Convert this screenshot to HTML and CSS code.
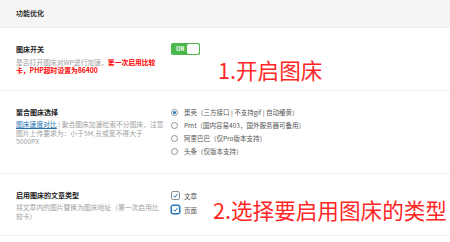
FILE: index.html
```html
<!DOCTYPE html>
<html lang="zh">
<head>
<meta charset="utf-8">
<link rel="stylesheet" href="styles.css">
</head>
<body>
<div class="panel">
  <div class="head">功能优化</div>

  <div class="row">
    <div class="left">
      <div class="label">图床开关</div>
      <div class="desc">是否打开图床对WP进行加速，<strong class="warn">第一次启用比较<br>卡，PHP超时设置为86400</strong></div>
    </div>
    <div class="right">
      <span class="toggle"><span class="toggle-text">ON</span><span class="knob"></span></span>
    </div>
    <div class="note note-1">1.开启图床</div>
  </div>

  <div class="row">
    <div class="left">
      <div class="label">聚合图床选择</div>
      <div class="desc"><a class="link" href="#">图床速度对比</a> | 聚合图床加速检索不分图床，注意<br>图片上传要求为：小于5M,长或宽不得大于<br>5000PX</div>
    </div>
    <div class="right">
      <div class="opt"><span class="radio on"></span>蛋壳（三方接口 | 不支持gif | 自动缓黄）</div>
      <div class="opt"><span class="radio"></span>Pmt（国内容易403，国外服务器可备用）</div>
      <div class="opt"><span class="radio"></span>阿里巴巴（仅Pro版本支持）</div>
      <div class="opt"><span class="radio"></span>头条（仅版本支持）</div>
    </div>
  </div>

  <div class="row">
    <div class="left">
      <div class="label">启用图床的文章类型</div>
      <div class="desc">将文章内的图片替换为图床地址（第一次启用比<br>较卡）</div>
    </div>
    <div class="right">
      <div class="chk-row"><span class="chk"><svg viewBox="0 0 10 10"><path d="M2 5.2 L4.2 7.4 L8.2 2.6" /></svg></span>文章</div>
      <div class="chk-row"><span class="chk focus"><svg viewBox="0 0 10 10"><path d="M2 5.2 L4.2 7.4 L8.2 2.6" /></svg></span>页面</div>
    </div>
    <div class="note note-2">2.选择要启用图床的类型</div>
  </div>
</div>
</body>
</html>
```

FILE: styles.css
```css
html, body {
  margin: 0;
  padding: 0;
  background: #fff;
}
body {
  font-family: "Noto Sans CJK SC", "Noto Sans", sans-serif;
  width: 450px;
  height: 242px;
  overflow: hidden;
}
.head {
  height: 27px;
  line-height: 27px;
  padding-left: 16px;
  background: #f5f5f5;
  border-bottom: 1px solid #ececec;
  font-size: 7px;
  font-weight: 700;
  color: #333;
}
.row {
  position: relative;
  display: flex;
  padding: 15px 16px 15px;
  border-bottom: 1px solid #f0f0f0;
}
.left {
  width: 148px;
  flex: none;
}
.right {
  margin-left: 7px;
}
.label {
  font-size: 7px;
  line-height: 12px;
  font-weight: 700;
  color: #222;
  margin-bottom: 2.5px;
}
.desc {
  font-size: 6.8px;
  line-height: 8.5px;
  color: #a0a0a0;
  white-space: nowrap;
}
.warn {
  color: #f00;
  font-weight: 700;
}
.link {
  color: #2271b1;
  text-decoration: underline;
}
.toggle {
  display: flex;
  align-items: center;
  width: 29px;
  height: 12px;
  box-sizing: border-box;
  background: #4cb84c;
  border-radius: 2px;
  padding: 1px;
}
.toggle-text {
  flex: 1;
  font-size: 5.5px;
  font-weight: 700;
  color: #fff;
  padding-left: 4px;
  line-height: 10px;
}
.knob {
  width: 12px;
  height: 10px;
  background: #fff;
  border-radius: 2px;
}
.opt {
  display: flex;
  align-items: center;
  height: 13px;
  font-size: 6.5px;
  color: #555;
}
.radio {
  width: 7px;
  height: 7px;
  box-sizing: border-box;
  border: 1px solid #8c8f94;
  border-radius: 50%;
  margin-right: 6px;
  position: relative;
  flex: none;
}
.radio.on::after {
  content: "";
  position: absolute;
  left: 1px;
  top: 1px;
  width: 3px;
  height: 3px;
  border-radius: 50%;
  background: #2271b1;
}
.chk-row {
  display: flex;
  align-items: center;
  height: 14px;
  font-size: 6.5px;
  color: #555;
}
.chk {
  width: 9px;
  height: 9px;
  box-sizing: border-box;
  border: 1px solid #8c8f94;
  border-radius: 2px;
  margin-right: 4px;
  display: flex;
  flex: none;
}
.chk.focus {
  border-color: #2271b1;
  box-shadow: 0 0 0 0.5px #2271b1;
}
.chk svg {
  width: 100%;
  height: 100%;
}
.chk path {
  fill: none;
  stroke: #2271b1;
  stroke-width: 1.4;
}
.note {
  position: absolute;
  color: #ff2626;
  font-size: 21.6px;
  line-height: 26px;
  white-space: nowrap;
}
.note-1 {
  left: 218px;
  top: 29px;
}
.note-2 {
  left: 213px;
  top: 23px;
}
```
